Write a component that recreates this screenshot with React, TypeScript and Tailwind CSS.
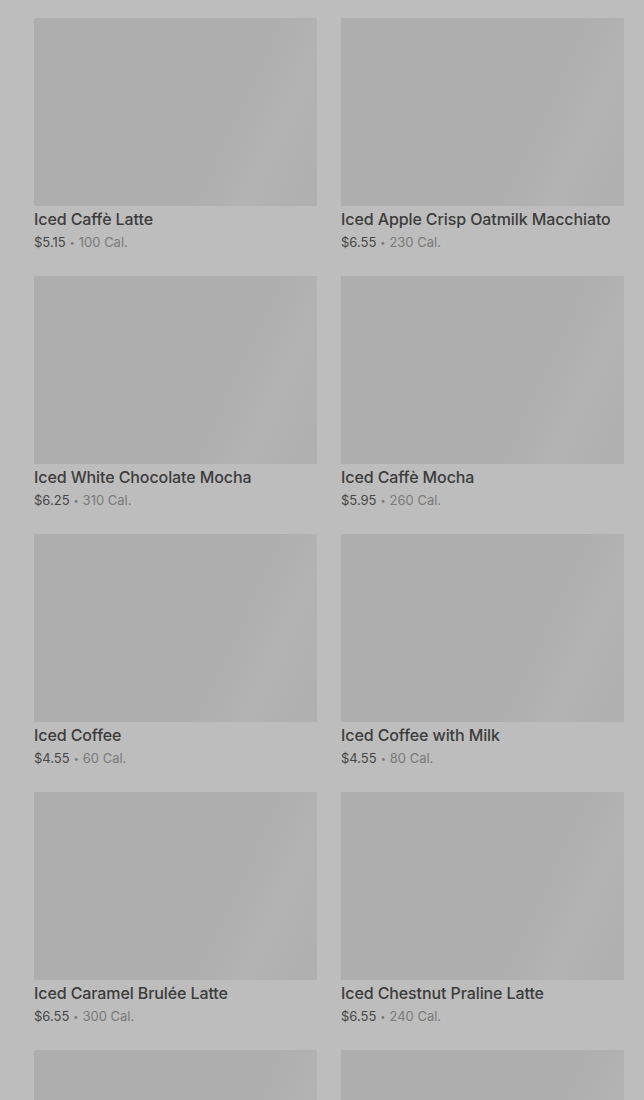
const items = [
  { name: "Iced Caffè Latte", price: "$5.15", cal: "100 Cal." },
  { name: "Iced Apple Crisp Oatmilk Macchiato", price: "$6.55", cal: "230 Cal." },
  { name: "Iced White Chocolate Mocha", price: "$6.25", cal: "310 Cal." },
  { name: "Iced Caffè Mocha", price: "$5.95", cal: "260 Cal." },
  { name: "Iced Coffee", price: "$4.55", cal: "60 Cal." },
  { name: "Iced Coffee with Milk", price: "$4.55", cal: "80 Cal." },
  { name: "Iced Caramel Brulée Latte", price: "$6.55", cal: "300 Cal." },
  { name: "Iced Chestnut Praline Latte", price: "$6.55", cal: "240 Cal." },
  { name: "Iced Sugar Cookie Latte", price: "$6.55", cal: "240 Cal." },
  { name: "Iced Peppermint Mocha", price: "$6.55", cal: "350 Cal." },
];

export default function App() {
  return (
    <div
      className="h-[1100px] overflow-hidden bg-[#bdbdbd] pl-[34px] pr-[20px] pt-[18px]"
      style={{ fontFamily: "Inter, 'Liberation Sans', sans-serif" }}
    >
      <div className="grid grid-cols-2 gap-x-6 gap-y-6">
        {items.map((it) => (
          <div key={it.name}>
            <div className="h-[188px] bg-[linear-gradient(115deg,#aeaeae_0%,#aeaeae_65%,#b3b3b3_80%,#afafaf_100%)]" />
            <p className="mt-[2px] h-[22px] text-[16px] font-medium leading-[22px] tracking-[-0.1px] text-[#3c3c3c]">
              {it.name}
            </p>
            <p className="mt-[2px] flex h-[20px] items-center gap-[4px] text-[13px] leading-[20px]">
              <span className="text-[#474747]">{it.price}</span>
              <span className="text-[9px] leading-none text-[#7a7a7a]">•</span>
              <span className="text-[#7a7a7a]">{it.cal}</span>
            </p>
          </div>
        ))}
      </div>
    </div>
  );
}
